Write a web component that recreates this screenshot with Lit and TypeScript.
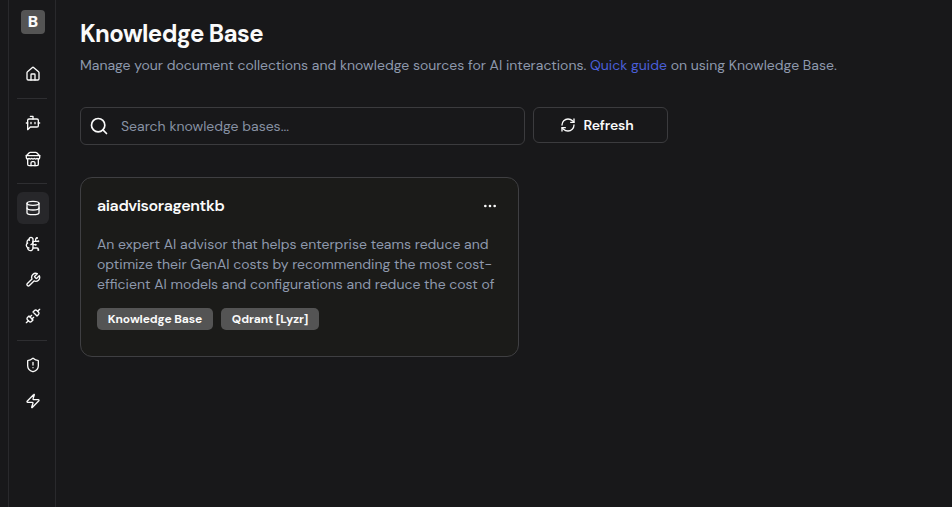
import { LitElement, html, svg, css } from "lit";
import { customElement, property } from "lit/decorators.js";

const icons: Record<string, unknown> = {
  home: svg`<path d="M15 21v-8a1 1 0 0 0-1-1h-4a1 1 0 0 0-1 1v8"/><path d="M3 10a2 2 0 0 1 .709-1.528l7-5.999a2 2 0 0 1 2.582 0l7 5.999A2 2 0 0 1 21 10v9a2 2 0 0 1-2 2H5a2 2 0 0 1-2-2z"/>`,
  bot: svg`<path d="M12 6V2H8"/><path d="m8 18-4 4V8a2 2 0 0 1 2-2h12a2 2 0 0 1 2 2v8a2 2 0 0 1-2 2Z"/><path d="M2 12h2M9 11v2M15 11v2M20 12h2"/>`,
  store: svg`<path d="m2 7 4.41-4.41A2 2 0 0 1 7.83 2h8.34a2 2 0 0 1 1.42.59L22 7"/><path d="M4 12v8a2 2 0 0 0 2 2h12a2 2 0 0 0 2-2v-8"/><path d="M15 22v-4a2 2 0 0 0-2-2h-2a2 2 0 0 0-2 2v4"/><path d="M2 7h20"/><path d="M22 7v3a2 2 0 0 1-2 2a2.7 2.7 0 0 1-1.59-.63.7.7 0 0 0-.82 0A2.7 2.7 0 0 1 16 12a2.7 2.7 0 0 1-1.59-.63.7.7 0 0 0-.82 0A2.7 2.7 0 0 1 12 12a2.7 2.7 0 0 1-1.59-.63.7.7 0 0 0-.82 0A2.7 2.7 0 0 1 8 12a2.7 2.7 0 0 1-1.59-.63.7.7 0 0 0-.82 0A2.7 2.7 0 0 1 4 12a2 2 0 0 1-2-2V7"/>`,
  database: svg`<ellipse cx="12" cy="5" rx="9" ry="3"/><path d="M3 5v14a9 3 0 0 0 18 0V5"/><path d="M3 12a9 3 0 0 0 18 0"/>`,
  brain: svg`<path d="M12 5a3 3 0 1 0-5.997.125 4 4 0 0 0-2.526 5.77 4 4 0 0 0 .556 6.588A4 4 0 1 0 12 18Z"/><path d="M9 13a4.5 4.5 0 0 0 3-4"/><path d="M6.003 5.125A3 3 0 0 0 6.401 6.5"/><path d="M3.477 10.896a4 4 0 0 1 .585-.396"/><path d="M6 18a4 4 0 0 1-1.967-.516"/><path d="M12 13h4M12 18h6a2 2 0 0 1 2 2v1M12 8h8M16 8V5a2 2 0 0 1 2-2"/><circle cx="16" cy="13" r=".5"/><circle cx="18" cy="3" r=".5"/><circle cx="20" cy="21" r=".5"/><circle cx="20" cy="8" r=".5"/>`,
  wrench: svg`<path d="M14.7 6.3a1 1 0 0 0 0 1.4l1.6 1.6a1 1 0 0 0 1.4 0l3.77-3.77a6 6 0 0 1-7.94 7.94l-6.91 6.91a2.12 2.12 0 0 1-3-3l6.91-6.91a6 6 0 0 1 7.94-7.94l-3.76 3.76z"/>`,
  plug: svg`<path d="m19 5 3-3M2 22l3-3"/><path d="M6.3 20.3a2.4 2.4 0 0 0 3.4 0L12 18l-6-6-2.3 2.3a2.4 2.4 0 0 0 0 3.4Z"/><path d="M7.5 13.5 10 11M10.5 16.5 13 14"/><path d="m12 6 6 6 2.3-2.3a2.4 2.4 0 0 0 0-3.4l-2.6-2.6a2.4 2.4 0 0 0-3.4 0Z"/>`,
  shield: svg`<path d="M20 13c0 5-3.5 7.5-7.66 8.95a1 1 0 0 1-.67-.01C7.5 20.5 4 18 4 13V6a1 1 0 0 1 1-1c2 0 4.5-1.2 6.24-2.72a1.17 1.17 0 0 1 1.52 0C14.51 3.81 17 5 19 5a1 1 0 0 1 1 1z"/><path d="M12 8v4M12 16h.01"/>`,
  zap: svg`<path d="M4 14a1 1 0 0 1-.78-1.63l9.9-10.2a.5.5 0 0 1 .86.46l-1.92 6.02A1 1 0 0 0 13 10h7a1 1 0 0 1 .78 1.63l-9.9 10.2a.5.5 0 0 1-.86-.46l1.92-6.02A1 1 0 0 0 11 14z"/>`,
  search: svg`<circle cx="11" cy="11" r="8"/><path d="m21 21-4.3-4.3"/>`,
  refresh: svg`<path d="M3 12a9 9 0 0 1 9-9 9.75 9.75 0 0 1 6.74 2.74L21 8"/><path d="M21 3v5h-5"/><path d="M21 12a9 9 0 0 1-9 9 9.75 9.75 0 0 1-6.74-2.74L3 16"/><path d="M8 16H3v5"/>`,
  more: svg`<circle cx="12" cy="12" r="1"/><circle cx="19" cy="12" r="1"/><circle cx="5" cy="12" r="1"/>`,
};

@customElement("ui-icon")
class UiIcon extends LitElement {
  @property() name = "home";
  static styles = css`
    :host { display: block; width: 16px; height: 16px; flex: none; }
    svg { display: block; width: 100%; height: 100%; fill: none; stroke: currentColor;
      stroke-width: 2; stroke-linecap: round; stroke-linejoin: round; }
  `;
  render() {
    return html`<svg viewBox="0 0 24 24">${icons[this.name]}</svg>`;
  }
}

@customElement("side-nav")
class SideNav extends LitElement {
  static styles = css`
    :host { display: flex; flex-direction: column; box-sizing: border-box; flex: none; width: 48px;
      margin-left: 8px; padding: 10px 0 0 8px; border: solid #29292c; border-width: 0 1px; color: #fafafa; }
    .logo { width: 24px; height: 24px; margin: 0 0 24px 4px; border-radius: 4px; background: #545454;
      font-size: 16px; font-weight: 900; line-height: 24px; text-align: center; }
    .group { display: flex; flex-direction: column; gap: 4px; }
    .item { display: flex; align-items: center; justify-content: center; width: 32px; height: 32px; border-radius: 6px; }
    .active { background: #27272a; }
    .line { width: 30px; height: 1px; margin: 8px 0; background: #2e2e31; }
  `;
  render() {
    const groups = [["home"], ["bot", "store"], ["database", "brain", "wrench", "plug"], ["shield", "zap"]];
    return html`<div class="logo">B</div>
      ${groups.map((g, i) => html`${i ? html`<div class="line"></div>` : ""}
        <div class="group">${g.map((n) => html`<div class="item ${n === "database" ? "active" : ""}"><ui-icon name=${n}></ui-icon></div>`)}</div>`)}`;
  }
}

@customElement("app-root")
class AppRoot extends LitElement {
  static styles = css`
    :host { display: flex; height: 507px; overflow: hidden; background: #18181a; color: #fafafa;
      font-family: "DM Sans", Inter, "Liberation Sans", sans-serif; font-size: 14px; line-height: 20px; }
    main { flex: 1; padding: 18px 24px 0; white-space: nowrap; }
    h1 { margin: 0; font-size: 24px; line-height: 32px; font-weight: 700; letter-spacing: -0.6px; }
    .sub { margin: 5px 0 0; color: #8e99ad; letter-spacing: 0.005px; }
    .link { color: #4a5fd8; }
    .tools { display: flex; align-items: flex-start; gap: 8px; margin-top: 32px; }
    .search { display: flex; align-items: center; gap: 12px; box-sizing: border-box; width: 445px; height: 38px;
      padding: 0 8px; border: 1px solid #3b3b3e; border-radius: 6px; color: #8791a3; }
    .search ui-icon { width: 20px; height: 20px; color: #fafafa; }
    .refresh { display: flex; align-items: center; justify-content: center; gap: 8px; box-sizing: border-box;
      width: 135px; height: 36px; padding-right: 8px; border: 1px solid #3b3b3e; border-radius: 6px; font-weight: 600;
      letter-spacing: -0.18px; }
    .card { box-sizing: border-box; width: 439px; height: 180px; margin-top: 32px; padding: 17px 16px 0;
      border: 1px solid #3f3f42; border-radius: 12px; background: #1b1b19; }
    .head { display: flex; align-items: center; justify-content: space-between; height: 22px; padding-right: 4px; }
    .title { font-size: 16px; font-weight: 600; letter-spacing: -0.4px; }
    .desc { margin-top: 17px; color: #8e99ad; }
    .tags { display: flex; gap: 8px; margin-top: 14px; }
    .tag { box-sizing: border-box; height: 22px; border-radius: 5px; background: #545454; font-size: 12px;
      line-height: 22px; font-weight: 700; letter-spacing: -0.1px; text-align: center; }
    .t1 { width: 116px; }
    .t2 { width: 98px; }
  `;
  render() {
    return html`<side-nav></side-nav>
      <main>
        <h1>Knowledge Base</h1>
        <p class="sub">Manage your document collections and knowledge sources for AI interactions. <span class="link">Quick guide</span> on using Knowledge Base.</p>
        <div class="tools">
          <div class="search"><ui-icon name="search"></ui-icon><span>Search knowledge bases...</span></div>
          <div class="refresh"><ui-icon name="refresh"></ui-icon><span>Refresh</span></div>
        </div>
        <section class="card">
          <div class="head"><span class="title">aiadvisoragentkb</span><ui-icon name="more"></ui-icon></div>
          <div class="desc">
            <div>An expert AI advisor that helps enterprise teams reduce and</div>
            <div>optimize their GenAI costs by recommending the most cost-</div>
            <div>efficient AI models and configurations and reduce the cost of</div>
          </div>
          <div class="tags"><span class="tag t1">Knowledge Base</span><span class="tag t2">Qdrant [Lyzr]</span></div>
        </section>
      </main>`;
  }
}
